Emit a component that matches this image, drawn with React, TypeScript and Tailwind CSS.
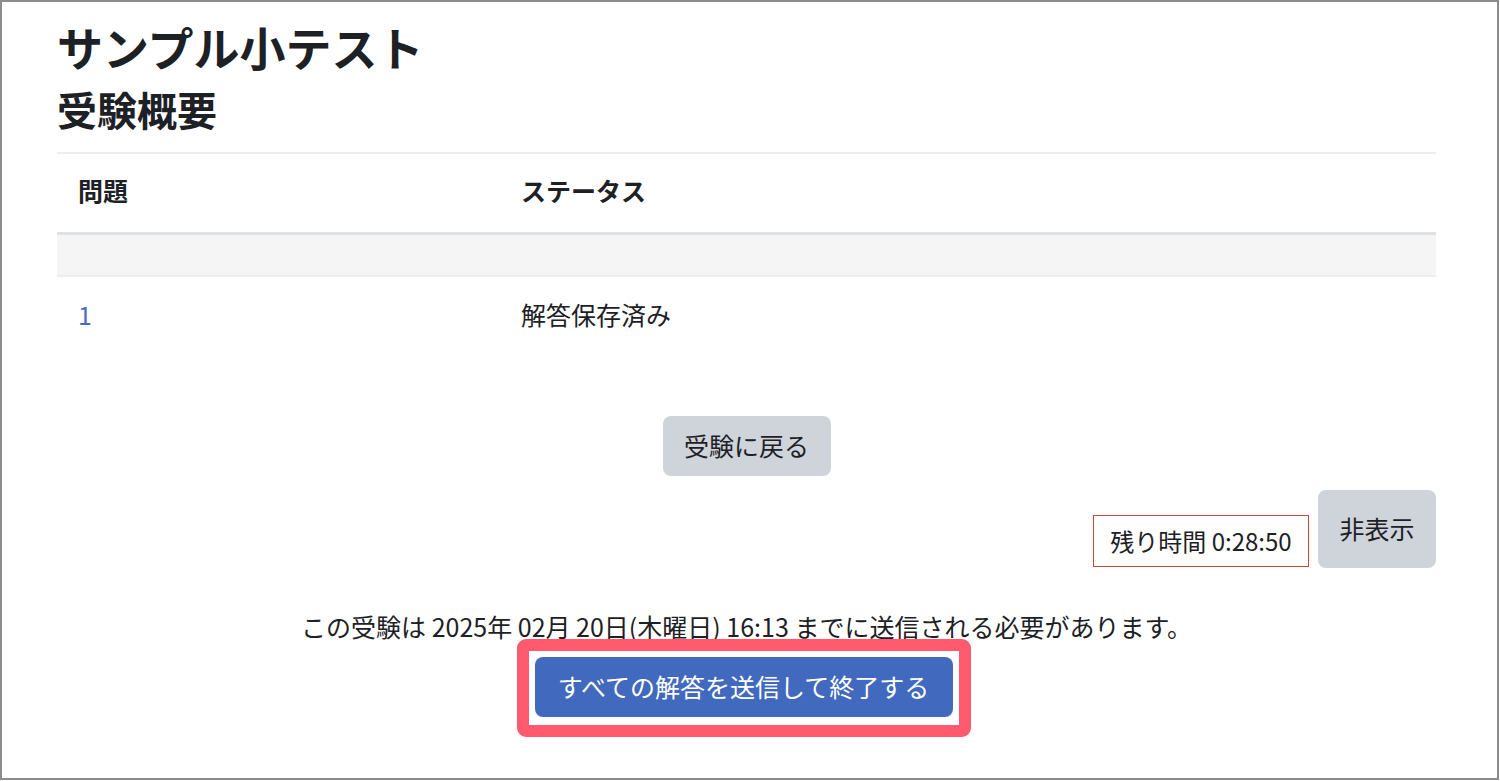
const jp = "font-['Noto_Sans_CJK_JP','Noto_Sans',sans-serif]"

export default function App() {
  return (
    <div className={`w-[1500px] h-[781px] bg-white ${jp} text-[#1d2125]`}>
      <div className="w-[1499px] h-[780px] border-2 border-[#8c8c8c] pt-[17px] pl-[55px] pr-[61px]">
        {/* Headings */}
        <h2 className="text-[46px] leading-[54px] font-bold">サンプル小テスト</h2>
        <h3 className="mt-[12px] text-[40px] leading-[48px] font-bold">受験概要</h3>

        {/* Summary table */}
        <div className="mt-[19px] border-t-2 border-[#eeeeee] text-[25px]">
          <div className="flex h-[78px] items-center font-bold pb-[4px]">
            <div className="w-[443px] pl-[21px]">問題</div>
            <div className="pl-[21px]">ステータス</div>
          </div>
          <div className="h-[3px] bg-[#dee2e6]" />
          <div className="h-[40px] bg-[#f5f5f5]" />
          <div className="h-[2px] bg-[#eceef0]" />
          <div className="flex h-[80px] items-center pb-[5px]">
            <div className="w-[443px] pl-[21px] text-[#4a6bbf]">1</div>
            <div className="pl-[21px]">解答保存済み</div>
          </div>
        </div>

        {/* Back to attempt */}
        <div className="mt-[59px] flex justify-center">
          <button className="w-[168px] h-[60px] rounded-[8px] bg-[#ced4da] text-[25px] text-[#1d2125]">
            受験に戻る
          </button>
        </div>

        {/* Timer */}
        <div className="mt-[14px] flex justify-end items-end gap-[9px]">
          <div className="mb-[1px] w-[216px] h-[52px] border border-[#c8463a] flex items-center justify-center text-[24px]">
            残り時間 0:28:50
          </div>
          <button className="w-[118px] h-[78px] rounded-[8px] bg-[#ced4da] text-[25px] text-[#1d2125]">
            非表示
          </button>
        </div>

        {/* Submit */}
        <div className="mt-[45px] text-center text-[25px] leading-[26px]">
          この受験は 2025年 02月 20日(木曜日) 16:13 までに送信される必要があります。
        </div>
        <div className="flex justify-center">
          <div className="ml-[-6px] rounded-[9px] border-[12px] border-[#ff5a6e] pt-[6px] pb-[8px] px-[6px]">
            <button className="w-[418px] h-[60px] rounded-[8px] bg-[#4169bd] text-white text-[25px]">
              すべての解答を送信して終了する
            </button>
          </div>
        </div>
      </div>
    </div>
  )
}
